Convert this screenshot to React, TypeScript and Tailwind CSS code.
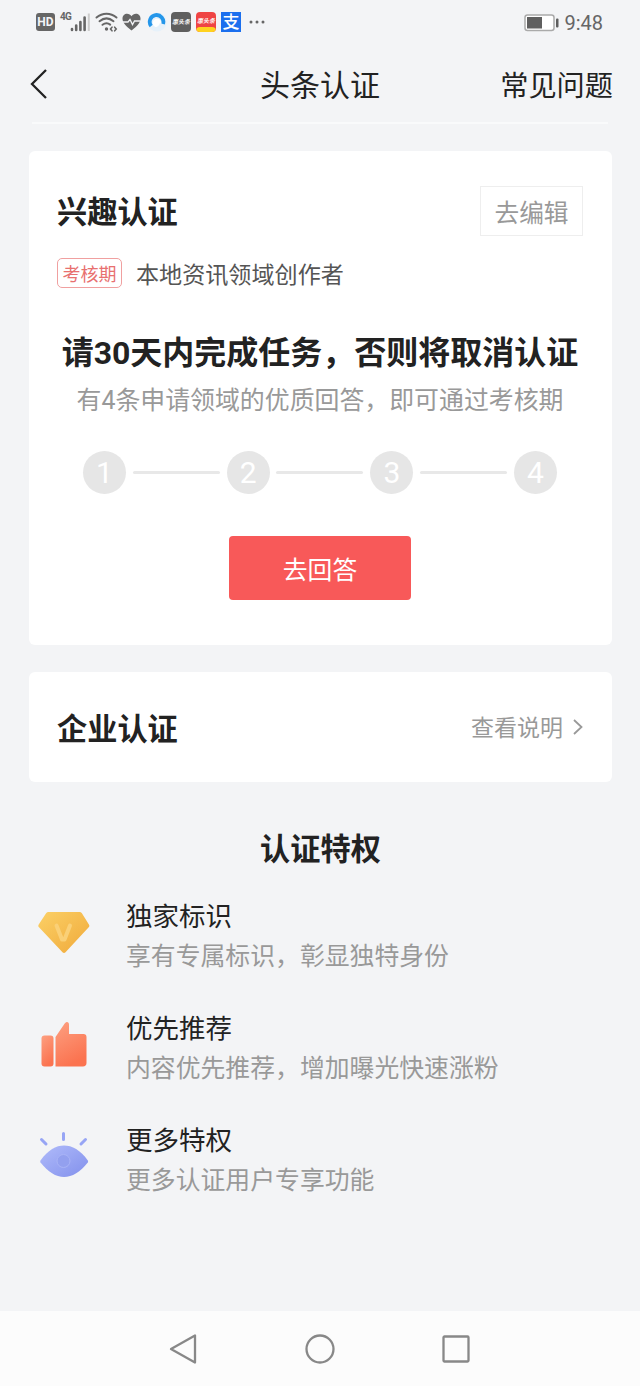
import React from 'react';

interface Privilege {
  title: string;
  desc: string;
  icon: React.ReactNode;
}

const DiamondIcon = () => (
  <svg width="56" height="56" viewBox="0 0 56 56">
    <defs>
      <linearGradient id="diamond" x1="0" y1="0" x2="1" y2="1">
        <stop offset="0" stopColor="#fbd066" />
        <stop offset="1" stopColor="#f0a93a" />
      </linearGradient>
    </defs>
    <path
      d="M12.5 8h31c1 0 1.8.4 2.4 1.200l7 11.300c.7 1 .5 2-.2 2.800L29.500 48.200c-.9.9-2.100.9-3 0L3 23.300c-.8-.8-.9-1.800-.3-2.800l7.400-11.300C10.700 8.400 11.500 8 12.500 8z"
      fill="url(#diamond)"
    />
    <path d="M20.500 21.500l5.500 14h2.500L34 21.500" fill="none" stroke="#fad077" strokeWidth="4" strokeLinecap="round" strokeLinejoin="round" />
  </svg>
);

const ThumbIcon = () => (
  <svg width="56" height="56" viewBox="0 0 56 56">
    <defs>
      <linearGradient id="thumb" x1="0" y1="0" x2="0.4" y2="1">
        <stop offset="0" stopColor="#fda081" />
        <stop offset="1" stopColor="#fb7350" />
      </linearGradient>
    </defs>
    <rect x="5.500" y="19.500" width="12" height="31" rx="3" fill="url(#thumb)" />
    <path
      d="M19.500 21L28 8.500c1.200-2 2.400-3 3.700-2.200 1.300.6 1.300 1.900 1.300 3.200v8.500h14.500c1.900 0 3 1.100 3 3v26c0 2.200-1.300 3.500-3.500 3.500H19.500z"
      fill="url(#thumb)"
    />
  </svg>
);

const EyeIcon = () => (
  <svg width="56" height="56" viewBox="0 0 56 56">
    <defs>
      <linearGradient id="eye" x1="0" y1="0" x2="1" y2="1">
        <stop offset="0" stopColor="#b0bbfa" />
        <stop offset="1" stopColor="#8290ec" />
      </linearGradient>
    </defs>
    <path d="M4.500 32.500C12 22 20 17.500 28 17.500S44.500 22 51.800 32.500c.4.700.4 1.300 0 2C44.500 44 36 49 28 49S12 44 4.500 34.500c-.4-.7-.4-1.300 0-2z" fill="url(#eye)" />
    <circle cx="27.500" cy="33" r="6.500" fill="#93a0ef" stroke="#a9b4f6" strokeWidth="1" />
    <path d="M27.500 5.500v6M5.500 11.500l4.500 4.500M49.500 11.500L45 16" stroke="#97a5f5" strokeWidth="3" strokeLinecap="round" />
  </svg>
);

const privileges: Privilege[] = [
  { title: '独家标识', desc: '享有专属标识，彰显独特身份', icon: <DiamondIcon /> },
  { title: '优先推荐', desc: '内容优先推荐，增加曝光快速涨粉', icon: <ThumbIcon /> },
  { title: '更多特权', desc: '更多认证用户专享功能', icon: <EyeIcon /> },
];

const steps = [1, 2, 3, 4];

const StatusBar = () => (
  <div className="flex h-[44px] items-center justify-between pl-9 pr-[37px] text-[#666]">
    <div className="flex items-center">
      <div className="flex h-[18px] w-[19px] items-center justify-center rounded-[3px] bg-[#666] text-[12px] leading-none font-bold text-[#f3f4f7]">
        HD
      </div>
      {/* Mobile signal */}
      <div className="ml-[5px] flex h-[20px] w-[31px]">
        <span className="w-[10px] text-[10px] leading-[10px] font-bold tracking-[-0.8px]">4G</span>
        <svg width="20" height="20" viewBox="0 0 20 20">
          <path d="M2 17v1M6.200 13.500V18M10.400 10v8M14.600 5.500V18" stroke="#666" strokeWidth="2.600" strokeLinecap="round" />
          <path d="M18.800 1.500v17.500" stroke="#ccc" strokeWidth="2" />
        </svg>
      </div>
      {/* Wi-Fi */}
      <svg className="ml-[4px]" width="23" height="20" viewBox="0 0 23 20" fill="none" stroke="#666" strokeWidth="2" strokeLinecap="round">
        <path d="M1.500 5.500c6-5 14-5 20 0M4.500 9.200c4.500-3.600 9.500-3.600 14 0M7.500 12.800c2.600-2 5.300-2 7.700-.2" />
        <circle cx="11.500" cy="17" r="1.700" fill="#666" stroke="none" />
        <path d="M17 15.200l-1.500 1.800 1.500 1.800M19.700 15.200l1.500 1.800-1.500 1.800" strokeWidth="1.600" />
      </svg>
      {/* Health */}
      <svg className="ml-1" width="19" height="18" viewBox="0 0 19 18">
        <path d="M9.500 17.500C3.500 13 .5 9.500.5 5.500.5 2.500 2.700.7 5 .7c2 0 3.600 1 4.500 2.600C10.400 1.700 12 .7 14 .7c2.300 0 4.500 1.800 4.500 4.800 0 4-3 7.500-9 12z" fill="#666" />
        <path d="M0 9h6l2-2.500 2.500 5L12.500 8h6" fill="none" stroke="#f3f4f7" strokeWidth="1.300" />
      </svg>
      {/* Browser */}
      <svg className="ml-[6px]" width="20" height="20" viewBox="0 0 20 20">
        <circle cx="10" cy="10" r="9.500" fill="#e6f1fa" />
        <path d="M4.200 14A6.800 6.800 0 1 1 16 12" fill="none" stroke="#2496ea" strokeWidth="3.800" />
        <circle cx="10" cy="11" r="4.300" fill="#fff" />
        <path d="M5 15c4 1 7-.5 8-4 1.500 1.200 3 2 4.500 2-1.500 4-8 7-12.500 2z" fill="#e6f1fa" />
      </svg>
      <div className="ml-[4px] flex h-5 w-5 items-center justify-center rounded-[4px] bg-[#5f5f5f] text-[6px] leading-none font-bold whitespace-nowrap text-white italic">
        惠头条
      </div>
      <div className="ml-[5px] flex h-5 w-5 flex-col items-center justify-between overflow-hidden rounded-[4px] bg-[#ef4444] text-white">
        <span className="mt-[5px] text-[6px] leading-[8px] font-bold whitespace-nowrap italic">惠头条</span>
        <span className="h-[5px] w-full rounded-t-[4px] bg-[#ffd21f]" />
      </div>
      <div className="ml-[5px] flex h-5 w-5 items-center justify-center bg-[#1b6fee] text-[17px] leading-none font-medium text-white">
        <span className="pt-px">支</span>
      </div>
      <svg className="ml-[8px]" width="16" height="4" viewBox="0 0 16 4" fill="#666">
        <circle cx="2" cy="2" r="1.500" />
        <circle cx="8" cy="2" r="1.500" />
        <circle cx="14" cy="2" r="1.500" />
      </svg>
    </div>
    <div className="flex items-center">
      <svg className="mt-px" width="35" height="18" viewBox="0 0 35 18">
        <rect x="1" y="1" width="29" height="15.500" rx="2.500" fill="#fff" stroke="#aaa" strokeWidth="1.500" />
        <rect x="3" y="3" width="15" height="11.500" fill="#5f5f5f" />
        <rect x="32" y="4.500" width="2.500" height="9" rx="1" fill="#5f5f5f" />
      </svg>
      <span className="ml-[5px] pt-[2px] text-[20px] leading-6">9:48</span>
    </div>
  </div>
);

const App: React.FC = () => {
  return (
    <div className="flex h-[1386px] w-[640px] flex-col bg-[#f3f4f6] font-['Roboto','Noto_Sans_CJK_SC',sans-serif] text-[#222]">
      <StatusBar />

      {/* Title bar */}
      <header className="mx-8 grid h-[80px] grid-cols-3 items-center border-b-2 border-[#f9fafb]">
        <svg className="mt-px -ml-1" width="20" height="32" viewBox="0 0 20 32" fill="none" stroke="#222" strokeWidth="2.300">
          <path d="M18 2L4 16l14 14" />
        </svg>
        <h1 className="pt-[6px] text-center text-[30px] leading-10">头条认证</h1>
        <span className="-mr-[5px] pt-[8px] text-right text-[28.200px] leading-10 whitespace-nowrap">常见问题</span>
      </header>

      {/* Interest certification */}
      <section className="mx-[28.500px] mt-[27px] h-[493.500px] rounded-[6px] bg-white px-[28.500px] pt-[35px]">
        <div className="flex items-center justify-between">
          <h2 className="pt-[4px] text-[30.200px] leading-[46px] font-bold">兴趣认证</h2>
          <button type="button" className="h-[50px] w-[103px] border border-[#eee] pt-[6px] text-[24.700px] leading-none text-[#999]">
            去编辑
          </button>
        </div>
        <div className="mt-[22px] flex items-center">
          <span className="flex h-[30px] w-[65px] items-center justify-center rounded-[5px] border border-[#f0a0a0] pt-[3px] text-[18px] leading-none text-[#e87070]">
            考核期
          </span>
          <span className="ml-[14px] pt-[5px] text-[23.100px] leading-[25px] text-[#555]">本地资讯领域创作者</span>
        </div>
        <h3 className="-mx-4 mt-[44px] text-center text-[32px] leading-[42px] font-bold whitespace-nowrap">
          请30天内完成任务，否则将取消认证
        </h3>
        <p className="-mx-4 mt-[9px] text-center text-[24.900px] leading-[36px] whitespace-nowrap text-[#999]">
          有4条申请领域的优质回答，即可通过考核期
        </p>
        <div className="mx-[26px] mt-[32px] flex items-center justify-between">
          {steps.map((step) => (
            <React.Fragment key={step}>
              {step > 1 && <span className="h-[3px] w-[87px] rounded-full bg-[#e8e8e8]" />}
              <span className="flex h-[43px] w-[43px] items-center justify-center rounded-full bg-[#e6e6e6] text-[30px] leading-none text-white">
                {step}
              </span>
            </React.Fragment>
          ))}
        </div>
        <button type="button" className="mx-auto mt-[42px] block h-[64px] w-[182px] rounded-[4px] bg-[#f85959] pt-[6px] text-[24.800px] leading-none text-white">
          去回答
        </button>
      </section>

      {/* Company certification */}
      <section className="mx-[28.500px] mt-[27px] flex h-[110.500px] items-center justify-between rounded-[6px] bg-white px-[28.500px]">
        <h2 className="pt-[6px] text-[30.200px] leading-[44px] font-bold">企业认证</h2>
        <div className="flex items-center text-[#999]">
          <span className="pt-[4px] text-[23px] leading-8">查看说明</span>
          <svg className="-mr-px ml-[9px]" width="12" height="18" viewBox="0 0 12 18" fill="none" stroke="#999" strokeWidth="1.800">
            <path d="M2 2l7.500 7L2 16" />
          </svg>
        </div>
      </section>

      {/* Privileges */}
      <h2 className="mt-[46px] pl-px text-center text-[30.200px] leading-[44px] font-bold">认证特权</h2>
      <ul className="mt-[25px] flex flex-col">
        {privileges.map((item) => (
          <li key={item.title} className="flex h-[112px] pl-9">
            <div className="mt-[7px] w-14">{item.icon}</div>
            <div className="ml-[34px]">
              <p className="text-[26.500px] leading-[40px]">{item.title}</p>
              <p className="text-[24.850px] leading-[40px] text-[#999]">{item.desc}</p>
            </div>
          </li>
        ))}
      </ul>

      {/* System navigation */}
      <nav className="mt-auto flex h-[75px] items-center justify-center gap-[106px] bg-[#fcfcfc]">
        <svg className="-ml-px" width="30" height="32" viewBox="0 0 30 32" fill="none" stroke="#888" strokeWidth="2.300" strokeLinejoin="round">
          <path d="M26 2.500v27L2 16z" />
        </svg>
        <svg width="30" height="30" viewBox="0 0 30 30" fill="none" stroke="#888" strokeWidth="2.300">
          <circle cx="15" cy="15" r="13.500" />
        </svg>
        <svg width="30" height="30" viewBox="0 0 30 30" fill="none" stroke="#888" strokeWidth="2.300">
          <rect x="2.500" y="2.500" width="25" height="25" rx="1" />
        </svg>
      </nav>
    </div>
  );
};

export default App;
